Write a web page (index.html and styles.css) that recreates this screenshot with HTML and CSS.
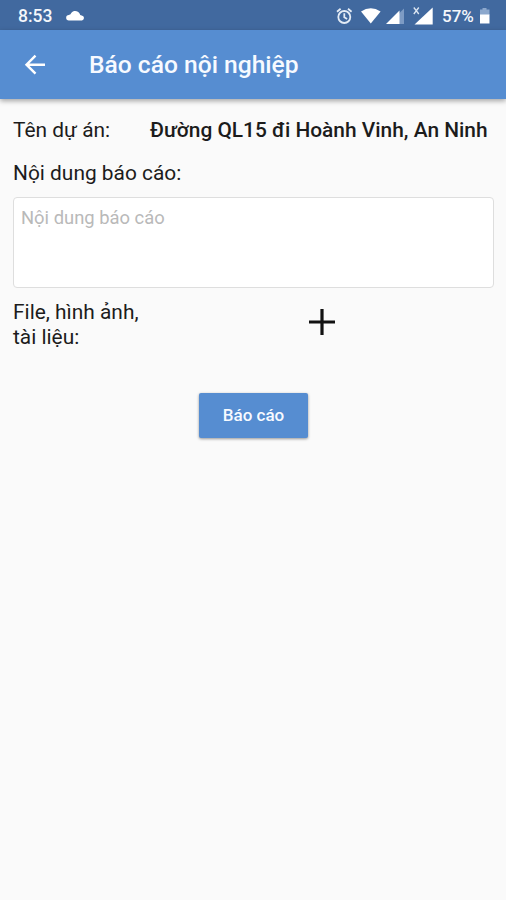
FILE: index.html
```html
<!DOCTYPE html>
<html lang="vi">
<head>
<meta charset="utf-8">
<title>Báo cáo nội nghiệp</title>
<link rel="stylesheet" href="styles.css">
</head>
<body>
<div class="status">
  <span class="clock">8:53</span>
  <svg class="cloud" width="19" height="12" viewBox="0 0 19 12"><path fill="#fff" d="M3 11.500a2.800 2.800 0 0 1-.1-5.600l1.600-.6A5 5 0 0 1 12.800 3.500a4 4 0 0 1 1.400 2.600l1.500.3a2.600 2.600 0 0 1 .3 5.100z"/></svg>
  <svg class="signals" width="100" height="22" viewBox="336 4 100 22">
    <g fill="none" stroke="#e3ebf5" stroke-width="1.800"><circle cx="344.300" cy="16" r="6"/><path d="M344.300 12.300v4l2.800 1.700M337 10.800l3.600-3M351.600 10.800l-3.600-3"/></g>
    <path fill="#fff" d="M361 10.500q9.800-6.500 19.600 0L370.800 22.600z"/>
    <path fill="#7d9bc4" d="M404 7.500V23h-5V12.500z"/>
    <path fill="#fff" d="M386 23l13.500-13.500V23z"/>
    <path fill="#fff" d="M414.500 23.500L432.700 6.500v17z"/>
    <path stroke="#dce6f2" stroke-width="1.300" d="M413.800 6.500l5 6.500M418.800 6.500l-5 6.500"/>
  </svg>
  <span class="percent">57%</span>
  <svg class="battery" width="12" height="18" viewBox="0 0 12 18"><path fill="#8ca8cd" d="M1 2.500h2.500V1h4v1.500H10.500V8H1z"/><path fill="#fff" d="M1 7.500h9.500v9H1z"/></svg>
</div>
<header class="appbar">
  <svg class="back" width="22" height="22" viewBox="0 0 22 22"><path fill="none" stroke="#fff" stroke-width="2.400" d="M21 10.700H3M11.500 1.700l-9 9 9 9"/></svg>
  <h1>Báo cáo nội nghiệp</h1>
</header>
<main>
  <div class="project"><span class="label">Tên dự án:</span><span class="name">Đường QL15 đi Hoành Vinh, An Ninh</span></div>
  <label class="caption" for="content">Nội dung báo cáo:</label>
  <textarea id="content" placeholder="Nội dung báo cáo"></textarea>
  <div class="files">
    <div class="files-label">File, hình ảnh,<br>tài liệu:</div>
    <svg class="plus" width="28" height="28" viewBox="0 0 28 28"><path stroke="#111" stroke-width="3.200" d="M14 1v26M1 14h26"/></svg>
  </div>
  <button type="button">Báo cáo</button>
</main>
</body>
</html>
```
FILE: styles.css
```css
* { box-sizing: border-box; }
body {
  margin: 0;
  min-height: 900px;
  background: #fafafa;
  color: #1c1c1c;
  font-family: Roboto, "Noto Sans", sans-serif;
}
svg { display: block; flex: none; }
.status {
  display: flex;
  align-items: center;
  height: 30px;
  padding: 1px 15px 0 18px;
  background: #41699f;
  color: #f4f7fb;
  font-size: 17.500px;
  font-weight: 500;
  line-height: 30px;
}
.clock { width: 48px; }
.cloud { margin-top: -2px; }
.signals { margin-left: auto; }
.percent { margin-left: 6px; width: 37px; white-space: nowrap; font-size: 17px; }
.battery { flex: none; }
.appbar {
  display: flex;
  align-items: center;
  height: 69px;
  padding-left: 24px;
  background: #568dd1;
  box-shadow: 0 2px 5px rgba(0, 0, 0, .35);
}
h1 {
  margin: 1px 0 0 43px;
  color: #f7faff;
  font-size: 24.600px;
  font-weight: 500;
  line-height: 30px;
  white-space: nowrap;
}
main { padding: 19px 12px 0 13px; }
.project,
.caption,
.files { font-size: 20.900px; }
.project {
  display: flex;
  height: 24px;
  line-height: 24px;
  white-space: nowrap;
}
.label { width: 137px; }
.name { font-weight: 500; }
.caption {
  display: block;
  margin: 19px 0 12px;
  line-height: 24px;
}
textarea {
  display: block;
  width: 100%;
  height: 91px;
  padding: 9px 7px;
  border: 1px solid #dedede;
  border-radius: 4px;
  background: #fff;
  font: 18.400px/22px Roboto, "Noto Sans", sans-serif;
  resize: none;
}
textarea::placeholder { color: #b9b9b9; }
.files {
  display: flex;
  margin-top: 12px;
  line-height: 25px;
}
.files-label { width: 295px; }
.plus { margin-top: 8px; }
button {
  display: block;
  width: 109px;
  height: 45px;
  margin: 43px auto 0 186px;
  padding: 0;
  border: 0;
  border-radius: 2px;
  background: #568dd1;
  box-shadow: 0 1px 3px rgba(0, 0, 0, .4);
  color: #f7faff;
  font: 500 17px/45px Roboto, "Noto Sans", sans-serif;
}
```
